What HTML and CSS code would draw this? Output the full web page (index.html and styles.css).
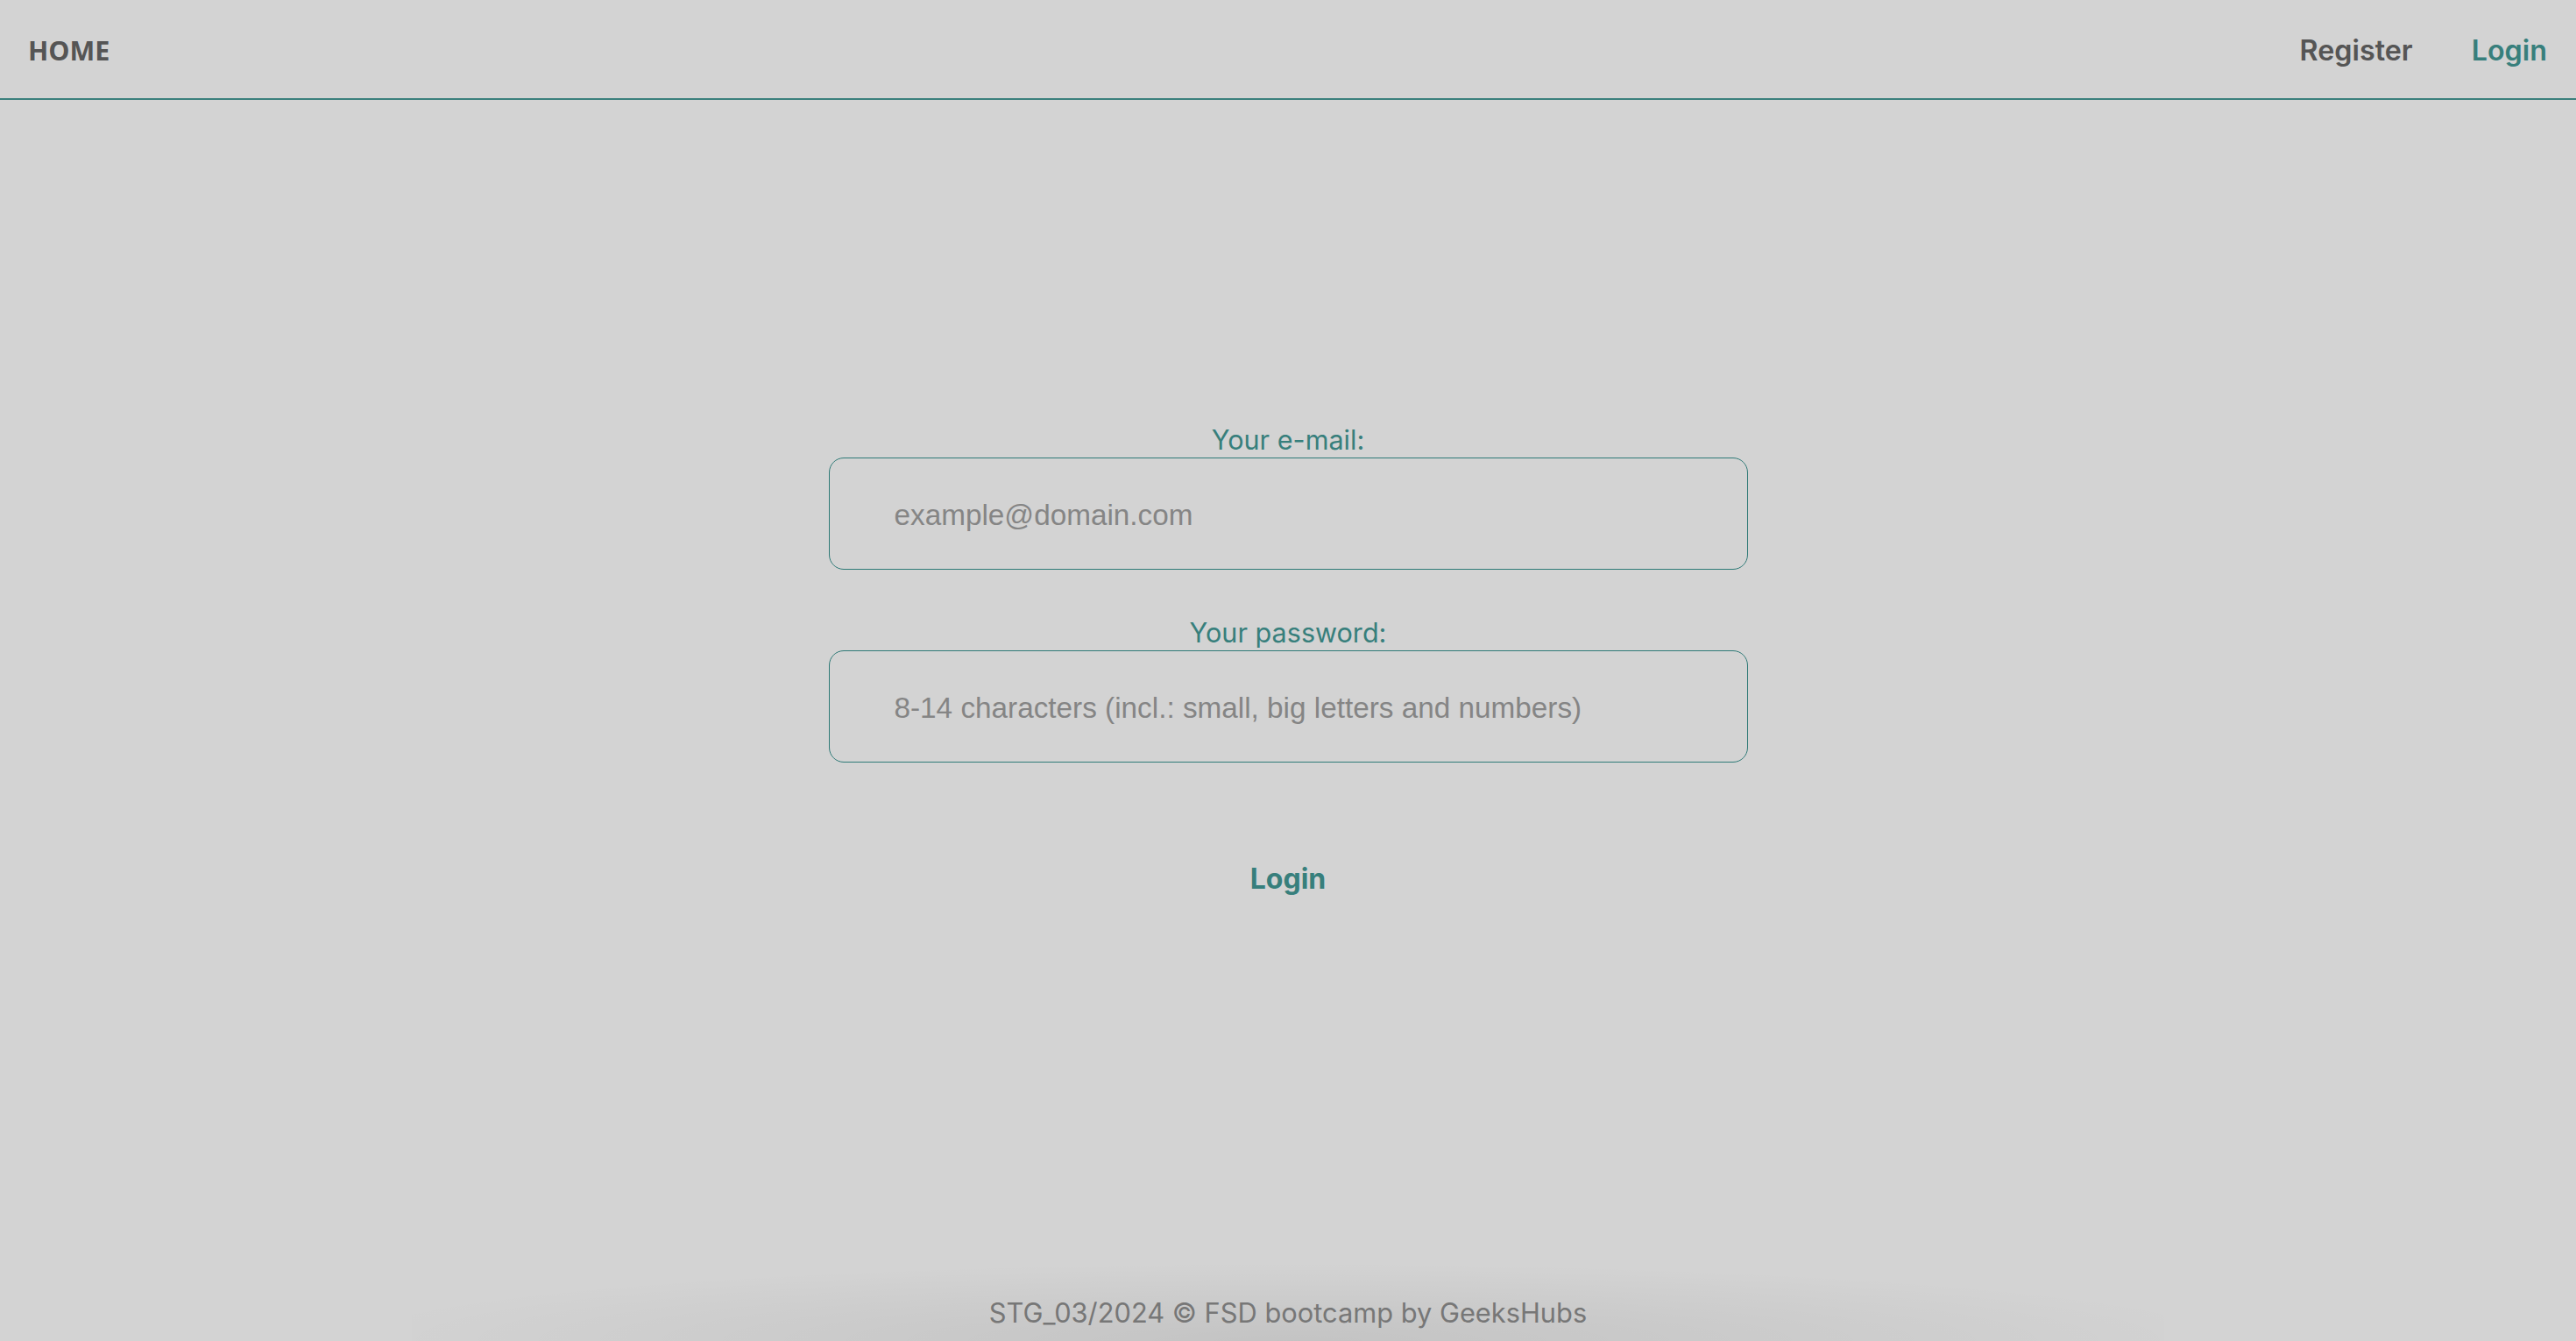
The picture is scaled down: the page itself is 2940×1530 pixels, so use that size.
FILE: index.html
```html
<!DOCTYPE html>
<html lang="en">
<head>
<meta charset="utf-8">
<title>Login</title>
<link rel="stylesheet" href="styles.css">
</head>
<body>
<div class="page">
  <header class="header">
    <a class="home" href="#">HOME</a>
    <nav class="nav">
      <a class="nav-link" href="#">Register</a>
      <a class="nav-link active" href="#">Login</a>
    </nav>
  </header>
  <main class="main">
    <form class="form">
      <label class="label" for="email">Your e-mail:</label>
      <input class="input" id="email" type="email" placeholder="example@domain.com">
      <label class="label label-second" for="password">Your password:</label>
      <input class="input" id="password" type="password" placeholder="8-14 characters (incl.: small, big letters and numbers)">
      <button class="login-btn" type="button">Login</button>
    </form>
  </main>
  <footer class="footer">
    <div class="footer-text">STG_03/2024 © FSD bootcamp by GeeksHubs</div>
  </footer>
</div>
</body>
</html>
```

FILE: styles.css
```css
* { box-sizing: border-box; }
html, body { margin: 0; padding: 0; height: 100%; }
body {
  background: #d3d3d3;
  font-family: Inter, "Noto Sans", sans-serif;
  overflow: hidden;
}
.page {
  display: flex;
  flex-direction: column;
  height: 1530px;
}
.header {
  height: 114px;
  display: flex;
  align-items: center;
  justify-content: space-between;
  padding: 2px 33px 0 32px;
  border-bottom: 2px solid #3a7f7c;
}
.home {
  font-family: "Open Sans", "Noto Sans", sans-serif;
  font-weight: 700;
  font-size: 30.5px;
  color: #555555;
  text-decoration: none;
}
.nav {
  display: flex;
  gap: 67px;
}
.nav-link {
  font-family: Inter, sans-serif;
  font-weight: 600;
  font-size: 32.3px;
  color: #555555;
  text-decoration: none;
}
.nav-link.active { color: #377f7c; }
.main {
  flex: 1;
  display: flex;
  justify-content: center;
}
.form {
  display: flex;
  flex-direction: column;
  align-items: center;
  padding-top: 369px;
}
.label {
  font-family: Inter, sans-serif;
  font-size: 30.6px;
  line-height: 38px;
  color: #377f7c;
  margin-bottom: 1px;
}
.label-second { margin-top: 53px; }
.input {
  width: 1049px;
  height: 128px;
  border: 1.5px solid #2f7a77;
  border-radius: 17px;
  background: transparent;
  padding: 4px 0 0 74px;
  font-family: "Liberation Sans", Arial, sans-serif;
  font-size: 33.3px;
  color: #555;
  outline: none;
}
.input::placeholder { color: #858585; }
.login-btn {
  margin-top: 114px;
  background: none;
  border: none;
  padding: 0;
  font-family: Inter, sans-serif;
  font-weight: 700;
  font-size: 32px;
  line-height: 38px;
  color: #377f7c;
  cursor: pointer;
}
.footer {
  align-self: center;
  width: 2000px;
  height: 90px;
  display: flex;
  align-items: flex-end;
  justify-content: center;
  padding-bottom: 14px;
  background: radial-gradient(ellipse 55% 100% at 50% 100%, rgba(0,0,0,0.075), rgba(0,0,0,0) 100%);
}
.footer-text {
  font-family: Inter, sans-serif;
  font-size: 30.8px;
  line-height: 36px;
  color: #777777;
}
```
